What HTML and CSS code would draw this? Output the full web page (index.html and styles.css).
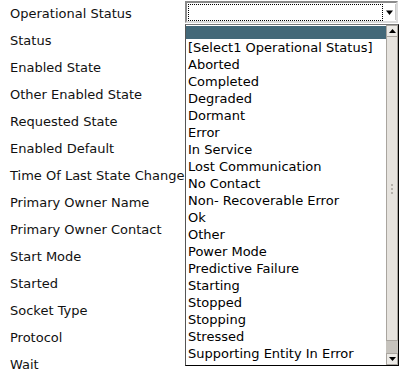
FILE: index.html
```html
<!DOCTYPE html>
<html>
<head>
<meta charset="utf-8">
<link rel="stylesheet" href="styles.css">
</head>
<body>
<div class="form">
  <div class="row">
    <span class="label">Operational Status</span>
    <div class="select">
      <span class="focus"></span>
      <span class="arrow"><svg width="9" height="7" viewBox="0 0 9 7"><path d="M1 1.5h7L4.5 6z" fill="#000"/></svg></span>
    </div>
  </div>
  <div class="row"><span class="label">Status</span></div>
  <div class="row"><span class="label">Enabled State</span></div>
  <div class="row"><span class="label">Other Enabled State</span></div>
  <div class="row"><span class="label">Requested State</span></div>
  <div class="row"><span class="label">Enabled Default</span></div>
  <div class="row"><span class="label">Time Of Last State Change</span></div>
  <div class="row"><span class="label">Primary Owner Name</span></div>
  <div class="row"><span class="label">Primary Owner Contact</span></div>
  <div class="row"><span class="label">Start Mode</span></div>
  <div class="row"><span class="label">Started</span></div>
  <div class="row"><span class="label">Socket Type</span></div>
  <div class="row"><span class="label">Protocol</span></div>
  <div class="row"><span class="label">Wait</span></div>

  <div class="dropdown">
    <div class="options">
      <div class="opt empty"></div>
      <div class="opt">[Select1 Operational Status]</div>
      <div class="opt">Aborted</div>
      <div class="opt">Completed</div>
      <div class="opt">Degraded</div>
      <div class="opt">Dormant</div>
      <div class="opt">Error</div>
      <div class="opt">In Service</div>
      <div class="opt">Lost Communication</div>
      <div class="opt">No Contact</div>
      <div class="opt">Non- Recoverable Error</div>
      <div class="opt">Ok</div>
      <div class="opt">Other</div>
      <div class="opt">Power Mode</div>
      <div class="opt">Predictive Failure</div>
      <div class="opt">Starting</div>
      <div class="opt">Stopped</div>
      <div class="opt">Stopping</div>
      <div class="opt">Stressed</div>
      <div class="opt">Supporting Entity In Error</div>
    </div>
    <div class="scrollbar">
      <div class="sbtn"><svg width="7" height="4" viewBox="0 0 7 4"><path d="M0 4h7L3.5 0z" fill="#000"/></svg></div>
      <div class="thumb"><span class="grip"></span></div>
      <div class="track"></div>
      <div class="sbtn"><svg width="7" height="4" viewBox="0 0 7 4"><path d="M0 0h7L3.5 4z" fill="#000"/></svg></div>
    </div>
  </div>
</div>
</body>
</html>
```

FILE: styles.css
```css
html, body {
  margin: 0;
  padding: 0;
  background: #fff;
}

body {
  font-family: "DejaVu Sans", sans-serif;
  font-size: 13px;
  color: #111;
}

.form {
  position: relative;
  width: 405px;
  height: 372px;
  overflow: hidden;
}

.row {
  display: flex;
  align-items: flex-start;
  height: 27px;
}

.label {
  width: 175px;
  padding-left: 10px;
  line-height: 27px;
  white-space: nowrap;
}

.select {
  margin-top: 1px;
  width: 213px;
  height: 22px;
  box-sizing: border-box;
  border: 2px solid;
  border-color: #8a8a8a #dcdcdc #dcdcdc #8a8a8a;
  background: #fff;
  display: flex;
  padding: 1px 0 1px 1px;
}

.focus {
  flex: 1;
  height: 17px;
  box-sizing: border-box;
  border: 1px dotted #000;
}

.arrow {
  width: 13px;
  height: 16px;
  box-sizing: border-box;
  display: flex;
  align-items: center;
  justify-content: center;
  background: #fff;
  border-right: 1px solid #c8c8c8;
}

.dropdown {
  position: absolute;
  left: 185px;
  top: 24px;
  width: 214px;
  height: 342px;
  box-sizing: border-box;
  border: 1px solid #000;
  border-left-color: #555;
  border-top-color: #777;
  background: #fff;
  display: flex;
  overflow: hidden;
}

.options {
  flex: 1;
  padding-top: 1px;
  overflow: hidden;
  color: #000;
}

.opt {
  height: 17px;
  line-height: 17px;
  padding-left: 2px;
  white-space: nowrap;
}

.opt.empty {
  height: 13px;
  background: #436878;
}

.scrollbar {
  width: 12px;
  display: flex;
  flex-direction: column;
  background: #c6c3bd;
}

.sbtn {
  height: 12px;
  box-sizing: border-box;
  border: 1px solid #a9a59f;
  background: #eceae6;
  display: flex;
  align-items: center;
  justify-content: center;
}

.thumb {
  flex: 1;
  box-sizing: border-box;
  border: 1px solid #a9a59f;
  border-top: 0;
  background: #e6e3de;
  display: flex;
  align-items: center;
  justify-content: center;
}

.grip {
  width: 2px;
  height: 10px;
  background: repeating-linear-gradient(to bottom, #b5b1ab 0, #b5b1ab 2px, transparent 2px, transparent 4px);
}

.track {
  height: 12px;
  background: #c6c3bd;
}
```
